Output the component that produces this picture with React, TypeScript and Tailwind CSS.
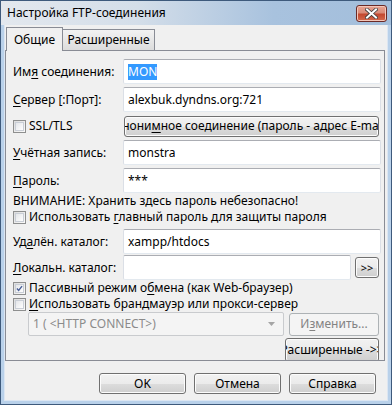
import type { ReactNode } from "react";

function U({ children }: { children: ReactNode }) {
  return <span className="underline decoration-1 underline-offset-[2px]">{children}</span>;
}

function Check({ checked = false }: { checked?: boolean }) {
  return (
    <span className="flex h-[13px] w-[13px] shrink-0 items-center justify-center border border-[#8e8f8f] bg-[linear-gradient(135deg,#dcdcdc,#fbfbfb)]">
      <span className="flex h-[9px] w-[9px] items-center justify-center border border-[#c9ced6] bg-[linear-gradient(135deg,#e4e6e9,#fefefe)]">
        {checked && (
          <svg width="9" height="9" viewBox="0 0 9 9">
            <path d="M1.2 4.6 L3.4 7 L7.8 1.4" fill="none" stroke="#4a5f97" strokeWidth="1.8" />
          </svg>
        )}
      </span>
    </span>
  );
}

function Field({ children, className = "" }: { children?: ReactNode; className?: string }) {
  return (
    <div
      className={`flex h-[25px] items-center overflow-hidden rounded-[2px] border border-[#abadb3] border-b-[#e3e9ef] border-x-[#dbdfe6] bg-white pl-[4px] ${className}`}
    >
      {children}
    </div>
  );
}

function Btn({ children, className = "", disabled = false }: { children: ReactNode; className?: string; disabled?: boolean }) {
  return (
    <div
      className={[
        "flex min-w-0 items-center justify-center overflow-hidden whitespace-nowrap rounded-[3px] border",
        disabled
          ? "border-[#adb2b5] bg-[#f4f4f4] text-[#838383]"
          : "border-[#707070] bg-[linear-gradient(#f2f2f2_0%,#ebebeb_50%,#dddddd_51%,#cfcfcf_100%)] text-black shadow-[inset_0_0_0_1px_#fcfcfc]",
        className,
      ].join(" ")}
    >
      <span className="shrink-0">{children}</span>
    </div>
  );
}

function Row({ label, children, className = "h-[25px]" }: { label: ReactNode; children: ReactNode; className?: string }) {
  return (
    <div className={`flex items-center ${className}`}>
      <div className="w-[110px] shrink-0 whitespace-nowrap">{label}</div>
      <div className="min-w-0 flex-1">{children}</div>
    </div>
  );
}

export default function App() {
  return (
    <div className="flex h-[405px] w-[392px] flex-col overflow-hidden border border-[#3e5a7c] bg-[#b9d1ea] font-['Noto_Sans',sans-serif] text-[12px] leading-[16px] text-black">
      {/* Title bar */}
      <div className="flex h-[24px] shrink-0 items-center justify-between bg-[linear-gradient(90deg,#e3e8ee_0%,#d4dee9_35%,#a8c2de_70%,#a3bedb_100%)] pl-[6px] pr-[4px]">
        <span className="text-[12px] text-black">Настройка FTP-соединения</span>
        <div className="flex h-[17px] w-[31px] items-center justify-center rounded-[3px] border border-[#6b2a26] bg-[linear-gradient(#e8a493_0%,#d98b78_45%,#c3482f_55%,#d46a4d_100%)] shadow-[inset_0_0_0_1px_#f3c6b9]">
          <svg width="13" height="11" viewBox="0 0 13 11">
            <path d="M2 1.5 L11 9.5 M11 1.5 L2 9.5" stroke="#3b3b3b" strokeWidth="3.6" strokeLinecap="square" />
            <path d="M2 1.5 L11 9.5 M11 1.5 L2 9.5" stroke="#ffffff" strokeWidth="2" strokeLinecap="square" />
          </svg>
        </div>
      </div>

      {/* Client */}
      <div className="mx-[3px] mb-[3px] flex flex-1 flex-col border border-[#dce6f2] border-t-0 bg-[#f0f0f0]">
        {/* Tabs */}
        <div className="mt-[2px] flex h-[23px] items-end pl-[1px]">
          <div className="relative z-10 -mb-px flex h-[24px] w-[57px] items-center justify-center border border-b-0 border-[#898c95] bg-[#f0f0f0] text-[12px]">
            Общие
          </div>
          <div className="flex h-[21px] w-[92px] items-center justify-center border border-l-0 border-b-0 border-[#898c95] bg-[linear-gradient(#f2f2f2,#dcdcdc)]">
            Расширенные
          </div>
        </div>

        {/* Panel */}
        <div className="mr-[2px] flex h-[311px] flex-col overflow-hidden border border-[#898c95] pl-[7px] pr-[3px] pt-[8px]">
          <div className="flex flex-col gap-[3px]">
            <Row label={<>Им<U>я</U> соединения:</>}>
              <Field>
                <span className="bg-[#3399ff] text-white">MON</span>
              </Field>
            </Row>
            <Row label={<><U>С</U>ервер [:Порт]:</>}>
              <Field>alexbuk.dyndns.org:721</Field>
            </Row>
            <Row
              className="h-[22px]"
              label={
                <span className="flex items-center gap-[3px]">
                  <Check />
                  <span>SSL/TLS</span>
                </span>
              }
            >
              <Btn className="ml-[1px] mr-[2px] h-[21px]">
                Анони<U>м</U>ное соединение (пароль - адрес E-mail)
              </Btn>
            </Row>
            <Row label={<><U>У</U>чётная запись:</>}>
              <Field>monstra</Field>
            </Row>
            <Row label={<><U>П</U>ароль:</>}>
              <Field>***</Field>
            </Row>
          </div>
          <div className="flex h-[16px] items-center whitespace-nowrap">ВНИМАНИЕ: Хранить здесь пароль небезопасно!</div>
          <div className="flex h-[17px] items-center gap-[3px] whitespace-nowrap">
            <Check />
            <span>
              Использовать <U>г</U>лавный пароль для защиты пароля
            </span>
          </div>
          <div className="mt-[4px] flex flex-col gap-[1px]">
            <Row label={<>Уд<U>а</U>лён. каталог:</>}>
              <Field>xampp/htdocs</Field>
            </Row>
            <Row label={<><U>Л</U>окальн. каталог:</>}>
              <div className="flex items-center gap-[4px]">
                <Field className="flex-1" />
                <Btn className="mr-[2px] h-[21px] w-[24px] text-[11px] leading-none">&gt;&gt;</Btn>
              </div>
            </Row>
          </div>
          <div className="flex h-[17px] items-center gap-[3px] whitespace-nowrap">
            <Check checked />
            <span>
              Пассивный режим о<U>б</U>мена (как Web-браузер)
            </span>
          </div>
          <div className="flex h-[18px] items-center gap-[3px] whitespace-nowrap">
            <Check />
            <span>
              <U>И</U>спользовать брандмауэр или прокси-сервер
            </span>
          </div>
          <div className="ml-[15px] flex items-center gap-[5px] pr-[2px]">
            <div className="flex h-[24px] w-[256px] items-center justify-between rounded-[2px] border border-[#c9cbce] bg-[#f4f4f4] pl-[4px] pr-[8px] text-[#8b8b8b]">
              <span>1 ( &lt;HTTP CONNECT&gt;)</span>
              <svg width="7" height="4" viewBox="0 0 7 4">
                <path d="M0 0 H7 L3.5 4 Z" fill="#a5a5a5" />
              </svg>
            </div>
            <Btn disabled className="h-[23px] flex-1">
              И<U>з</U>менить...
            </Btn>
          </div>
          <div className="mt-[2px] flex justify-end pr-[2px]">
            <Btn className="h-[24px] w-[94px] shrink-0">Расширенные -&gt;&gt;</Btn>
          </div>
        </div>

        {/* Bottom buttons */}
        <div className="flex flex-1 items-start justify-end gap-[8px] pr-[11px] pt-[12px]">
          <Btn className="h-[21px] w-[87px] border-[#3c7fb1] shadow-[inset_0_0_0_1px_#c4e5f6]">OK</Btn>
          <Btn className="h-[21px] w-[87px]">Отмена</Btn>
          <Btn className="h-[21px] w-[87px]">Справка</Btn>
        </div>
      </div>
    </div>
  );
}
